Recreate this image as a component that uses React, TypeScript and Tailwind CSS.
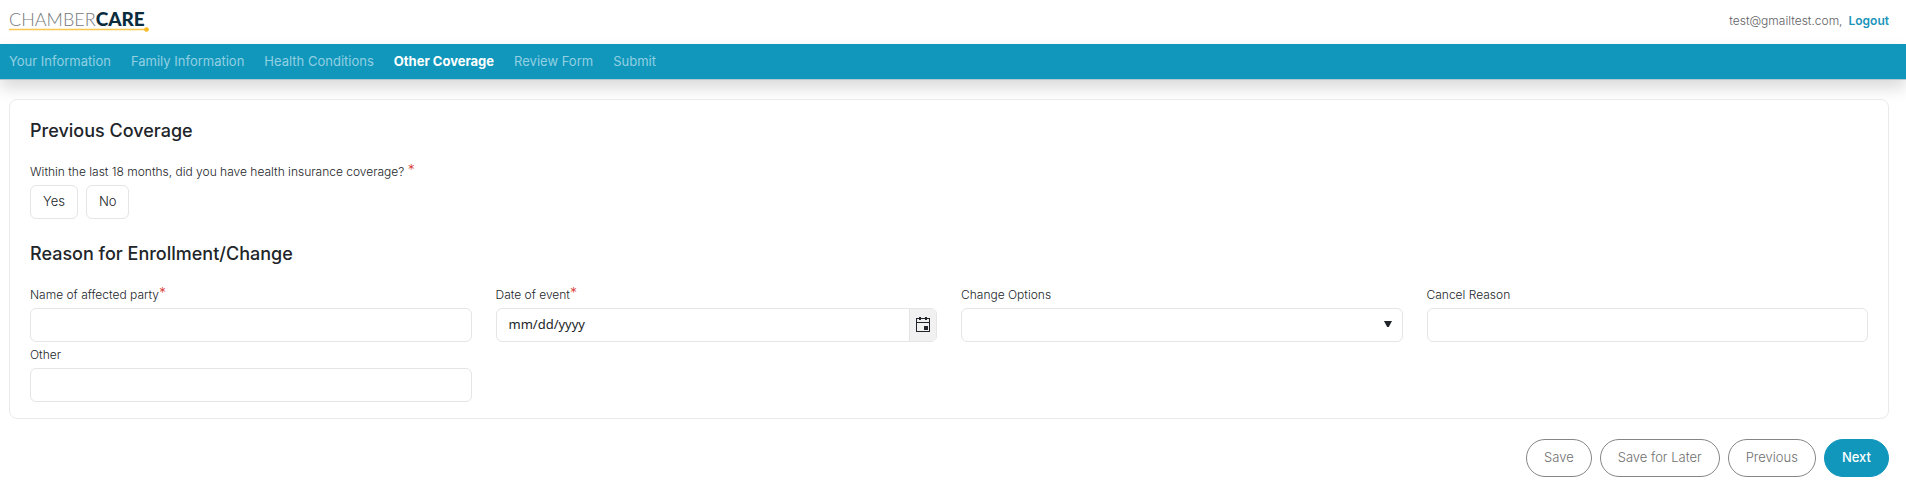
import React, { useState } from "react";

const steps = [
  "Your Information",
  "Family Information",
  "Health Conditions",
  "Other Coverage",
  "Review Form",
  "Submit",
];

const fieldClass =
  "h-[34px] w-full rounded-md border border-[#e4e5e7] bg-white px-3 text-[13px] text-[#212529] outline-none focus:border-[#1197bc]";

const outlineButton =
  "h-[38px] rounded-full border border-[#868686] bg-white px-[17px] text-[13px] font-light text-[#6f6f6f]";

function Required() {
  return <sup className="top-0 align-[1px] text-[14px] leading-none text-[#d9403a]">*</sup>;
}

function Field({
  id,
  label,
  required = false,
  children,
}: {
  id: string;
  label: string;
  required?: boolean;
  children: React.ReactNode;
}) {
  return (
    <div className="min-w-0">
      <label htmlFor={id} className="block h-[26px] text-[12px] leading-[26px] font-light">
        {label}
        {required && <Required />}
      </label>
      {children}
    </div>
  );
}

function Logo() {
  return (
    <a href="#" aria-label="ChamberCare" className="block w-[141px]">
      <span className="flex h-4 items-baseline font-['Lato'] leading-4 whitespace-nowrap">
        <span className="text-[18px] font-light text-[#77797b]">CHAMBER</span>
        <span className="text-[19px] font-black text-[#0b2c3d]">CARE</span>
      </span>
      <svg viewBox="0 0 141 5" className="block h-[5px] w-[141px]" aria-hidden="true">
        <path d="M0 2.5H136" stroke="#fbc64e" strokeWidth="1.3" />
        <path d="M137.5 .2V4.8M135.2 2.5H139.8" stroke="#f9b91f" strokeWidth="2.4" />
      </svg>
    </a>
  );
}

export default function App() {
  const [answer, setAnswer] = useState("");

  return (
    <div className="min-h-screen bg-white font-['Inter',sans-serif] text-[#212529]">
      <header className="flex h-11 items-center justify-between pr-[17px] pb-0.5 pl-[9px]">
        <Logo />
        <div className="flex items-center gap-1.5 text-[12px]">
          <span className="font-light text-[#5f6265]">test@gmailtest.com,</span>
          <a href="#" className="font-semibold text-[#1a94ba]">
            Logout
          </a>
        </div>
      </header>

      <nav className="flex h-9 items-center gap-5 border-b border-[#b5c9d0] bg-[#1197bc] px-[9px] text-[13px] shadow-[0_8px_16px_rgba(0,0,0,0.15)]">
        {steps.map((step) => (
          <a
            key={step}
            href="#"
            aria-current={step === "Other Coverage" ? "step" : undefined}
            className={
              step === "Other Coverage" ? "font-bold text-white" : "font-normal text-[#92d0e2]"
            }
          >
            {step}
          </a>
        ))}
      </nav>

      <main className="pt-[19px] pr-[17px] pb-5 pl-[9px]">
        <form onSubmit={(e) => e.preventDefault()}>
          <div className="rounded-lg border border-[#e9eaeb] bg-white px-5 pt-[19px] pb-4">
            <h2 className="mb-4 text-[18px] leading-6 font-medium">Previous Coverage</h2>
            <fieldset>
              <legend className="h-[26px] text-[12px] leading-[26px] font-light">
                Within the last 18 months, did you have health insurance coverage? <Required />
              </legend>
              <div className="flex gap-2">
                {["Yes", "No"].map((option) => (
                  <button
                    key={option}
                    type="button"
                    aria-pressed={answer === option}
                    onClick={() => setAnswer(option)}
                    className="h-[34px] rounded-md border border-[#e4e5e7] bg-white px-3 text-[13px] font-light aria-pressed:border-[#1197bc]"
                  >
                    {option}
                  </button>
                ))}
              </div>
            </fieldset>

            <h2 className="mt-[23px] mb-4 text-[18px] leading-6 font-medium">
              Reason for Enrollment/Change
            </h2>
            <div className="grid grid-cols-4 gap-x-6">
              <Field id="party" label="Name of affected party" required>
                <input id="party" type="text" className={fieldClass} />
              </Field>
              <Field id="date" label="Date of event" required>
                <div className="flex h-[34px] overflow-hidden rounded-md border border-[#e4e5e7]">
                  <input
                    id="date"
                    type="text"
                    placeholder="mm/dd/yyyy"
                    className="min-w-0 flex-1 px-3 font-['Noto_Sans'] text-[13px] outline-none placeholder:text-[#212529]"
                  />
                  <button
                    type="button"
                    aria-label="Choose a date"
                    className="flex w-[27px] items-center justify-center border-l border-[#e4e5e7] bg-[#f1f1f1]"
                  >
                    <svg width="16" height="16" viewBox="0 0 16 16" fill="#212529" aria-hidden="true">
                      <path
                        fillRule="evenodd"
                        d="M4 0h2v1h4V0h2v1h3v14H1V1h3zM2 2v3h12V2h-2v1h-2V2H6v1H4V2zm0 4v8h12V6zM9 9h4v4H9z"
                      />
                    </svg>
                  </button>
                </div>
              </Field>
              <Field id="change" label="Change Options">
                <div className="relative">
                  <select id="change" className={`${fieldClass} appearance-none`}>
                    <option value=""></option>
                  </select>
                  <svg
                    viewBox="0 0 8 6"
                    className="pointer-events-none absolute top-[13px] right-[11px] h-1.5 w-2"
                    fill="#212529"
                    aria-hidden="true"
                  >
                    <path d="M0 0h8L4.8 6H3.2z" />
                  </svg>
                </div>
              </Field>
              <Field id="cancel" label="Cancel Reason">
                <input id="cancel" type="text" className={fieldClass} />
              </Field>
              <Field id="other" label="Other">
                <input id="other" type="text" className={fieldClass} />
              </Field>
            </div>
          </div>

          <div className="mt-5 flex justify-end gap-2">
            <button type="button" className={outlineButton}>
              Save
            </button>
            <button type="button" className={outlineButton}>
              Save for Later
            </button>
            <button type="button" className={outlineButton}>
              Previous
            </button>
            <button
              type="submit"
              className="h-[38px] rounded-full border border-[#1197bc] bg-[#1197bc] px-[17px] text-[13px] font-medium text-white"
            >
              Next
            </button>
          </div>
        </form>
      </main>
    </div>
  );
}
